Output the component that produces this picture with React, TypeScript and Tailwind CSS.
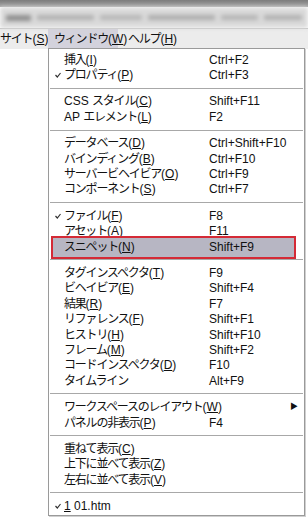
import React from 'react';

type Item =
  | { sep: true }
  | { label: string; key?: string; shortcut?: string; checked?: boolean; sub?: boolean; active?: boolean };

// メニュー項目: label + (key) の形で表示、key の文字に下線
const items: Item[] = [
  { label: '挿入', key: 'I', shortcut: 'Ctrl+F2' },
  { label: 'プロパティ', key: 'P', shortcut: 'Ctrl+F3', checked: true },
  { sep: true },
  { label: 'CSS スタイル', key: 'C', shortcut: 'Shift+F11' },
  { label: 'AP エレメント', key: 'L', shortcut: 'F2' },
  { sep: true },
  { label: 'データベース', key: 'D', shortcut: 'Ctrl+Shift+F10' },
  { label: 'バインディング', key: 'B', shortcut: 'Ctrl+F10' },
  { label: 'サーバービヘイビア', key: 'O', shortcut: 'Ctrl+F9' },
  { label: 'コンポーネント', key: 'S', shortcut: 'Ctrl+F7' },
  { sep: true },
  { label: 'ファイル', key: 'F', shortcut: 'F8', checked: true },
  { label: 'アセット(A)', shortcut: 'F11' },
  { label: 'スニペット', key: 'N', shortcut: 'Shift+F9', active: true },
  { sep: true },
  { label: 'タグインスペクタ', key: 'T', shortcut: 'F9' },
  { label: 'ビヘイビア', key: 'E', shortcut: 'Shift+F4' },
  { label: '結果', key: 'R', shortcut: 'F7' },
  { label: 'リファレンス', key: 'F', shortcut: 'Shift+F1' },
  { label: 'ヒストリ', key: 'H', shortcut: 'Shift+F10' },
  { label: 'フレーム', key: 'M', shortcut: 'Shift+F2' },
  { label: 'コードインスペクタ', key: 'D', shortcut: 'F10' },
  { label: 'タイムライン', shortcut: 'Alt+F9' },
  { sep: true },
  { label: 'ワークスペースのレイアウト', key: 'W', sub: true },
  { label: 'パネルの非表示', key: 'P', shortcut: 'F4' },
  { sep: true },
  { label: '重ねて表示', key: 'C' },
  { label: '上下に並べて表示', key: 'Z' },
  { label: '左右に並べて表示', key: 'V' },
  { sep: true },
];

const font = { fontFamily: '"Liberation Sans", "Noto Sans CJK JP", sans-serif' };

// 和文だけ詰める (MS UI Gothic のプロポーショナルかな幅に寄せる)
const Jp = ({ text }: { text: string }) => (
  <>
    {text.split(/([\u3000-\u9fff\uff00-\uffef]+)/).map((part, i) =>
      /[\u3000-\u9fff\uff00-\uffef]/.test(part) ? (
        <span key={i} className="tracking-[-1.2px]">{part}</span>
      ) : (
        <React.Fragment key={i}>{part}</React.Fragment>
      )
    )}
  </>
);

const Check = () => (
  <svg width="6" height="6" viewBox="0 0 6 6">
    <path d="M0.5 3 L2.3 5 L5.5 1" fill="none" stroke="#333" strokeWidth="1.2" />
  </svg>
);

const Label = ({ label, k }: { label: string; k?: string }) => (
  <span>
    <Jp text={label} />
    {k && (
      <>
        (<span className="underline underline-offset-[1px]">{k}</span>)
      </>
    )}
  </span>
);

export default function App() {
  return (
    <div className="relative w-[308px] h-[518px] overflow-hidden bg-white text-[12px] text-[#111]" style={font}>
      {/* ぼかしたタイトルバー */}
      <div className="h-[7px] bg-gradient-to-b from-[#7d7d7d] to-[#a5a5a5]" />
      <div className="h-[21px] bg-[#dadada] flex items-center gap-[6px] px-[6px] overflow-hidden blur-[2px]">
        <div className="h-[6px] w-[26px] bg-[#8e8e8e]" />
        <div className="h-[5px] w-[60px] bg-[#b0b0b0]" />
        <div className="h-[5px] w-[44px] bg-[#b6b6b6]" />
        <div className="h-[5px] w-[70px] bg-[#acacac]" />
        <div className="h-[5px] w-[38px] bg-[#b4b4b4]" />
        <div className="h-[5px] w-[40px] bg-[#b0b0b0]" />
      </div>
      <div className="h-px bg-[#c4c4c4]" />

      {/* メニューバー */}
      <div className="h-[20px] bg-[#ececec] flex items-center">
        <div className="w-[48px] whitespace-nowrap">
          <Jp text="サイト" />(<span className="underline">S</span>)
        </div>
        <div className="w-[70px] h-full flex items-center pl-[6px] bg-[#d3d2dc] whitespace-nowrap">
          <Jp text="ウィンドウ" />(<span className="underline">W</span>)
        </div>
        <div className="pl-[10px] whitespace-nowrap">
          <Jp text="ヘルプ" />(<span className="underline">H</span>)
        </div>
      </div>

      {/* ドロップダウン */}
      <div className="absolute left-[48px] top-[48px] w-[257px] border border-[#9a9a9a] bg-white pt-[3px] pb-px shadow-[1px_1px_0_#d0d0d0]">
        {items.map((it, i) =>
          'sep' in it ? (
            <div key={i} className="h-[11px] flex items-center px-px">
              <div className="h-px w-full bg-[#a8a8a8]" />
            </div>
          ) : (
            <div key={i} className="relative h-[15.4px] grid grid-cols-[15px_145px_1fr] items-center leading-none">
              {it.active && (
                <div className="absolute left-[2px] -top-[3px] w-[245px] h-[23px] bg-[#b7b6c3] border-2 border-[#d42a36]" />
              )}
              <div className="relative flex pl-[6px]">{it.checked && <Check />}</div>
              <div className="relative whitespace-nowrap">
                <Label label={it.label} k={it.key} />
              </div>
              <div className="relative whitespace-nowrap flex items-center">
                {it.shortcut}
                {it.sub && <span className="ml-auto mr-[6px] text-[8px]">▶</span>}
              </div>
            </div>
          )
        )}
        <div className="h-[15.4px] grid grid-cols-[15px_145px_1fr] items-center leading-none">
          <div className="flex pl-[6px]">
            <Check />
          </div>
          <div className="whitespace-nowrap">
            <span className="underline">1</span> 01.htm
          </div>
        </div>
      </div>
    </div>
  );
}
